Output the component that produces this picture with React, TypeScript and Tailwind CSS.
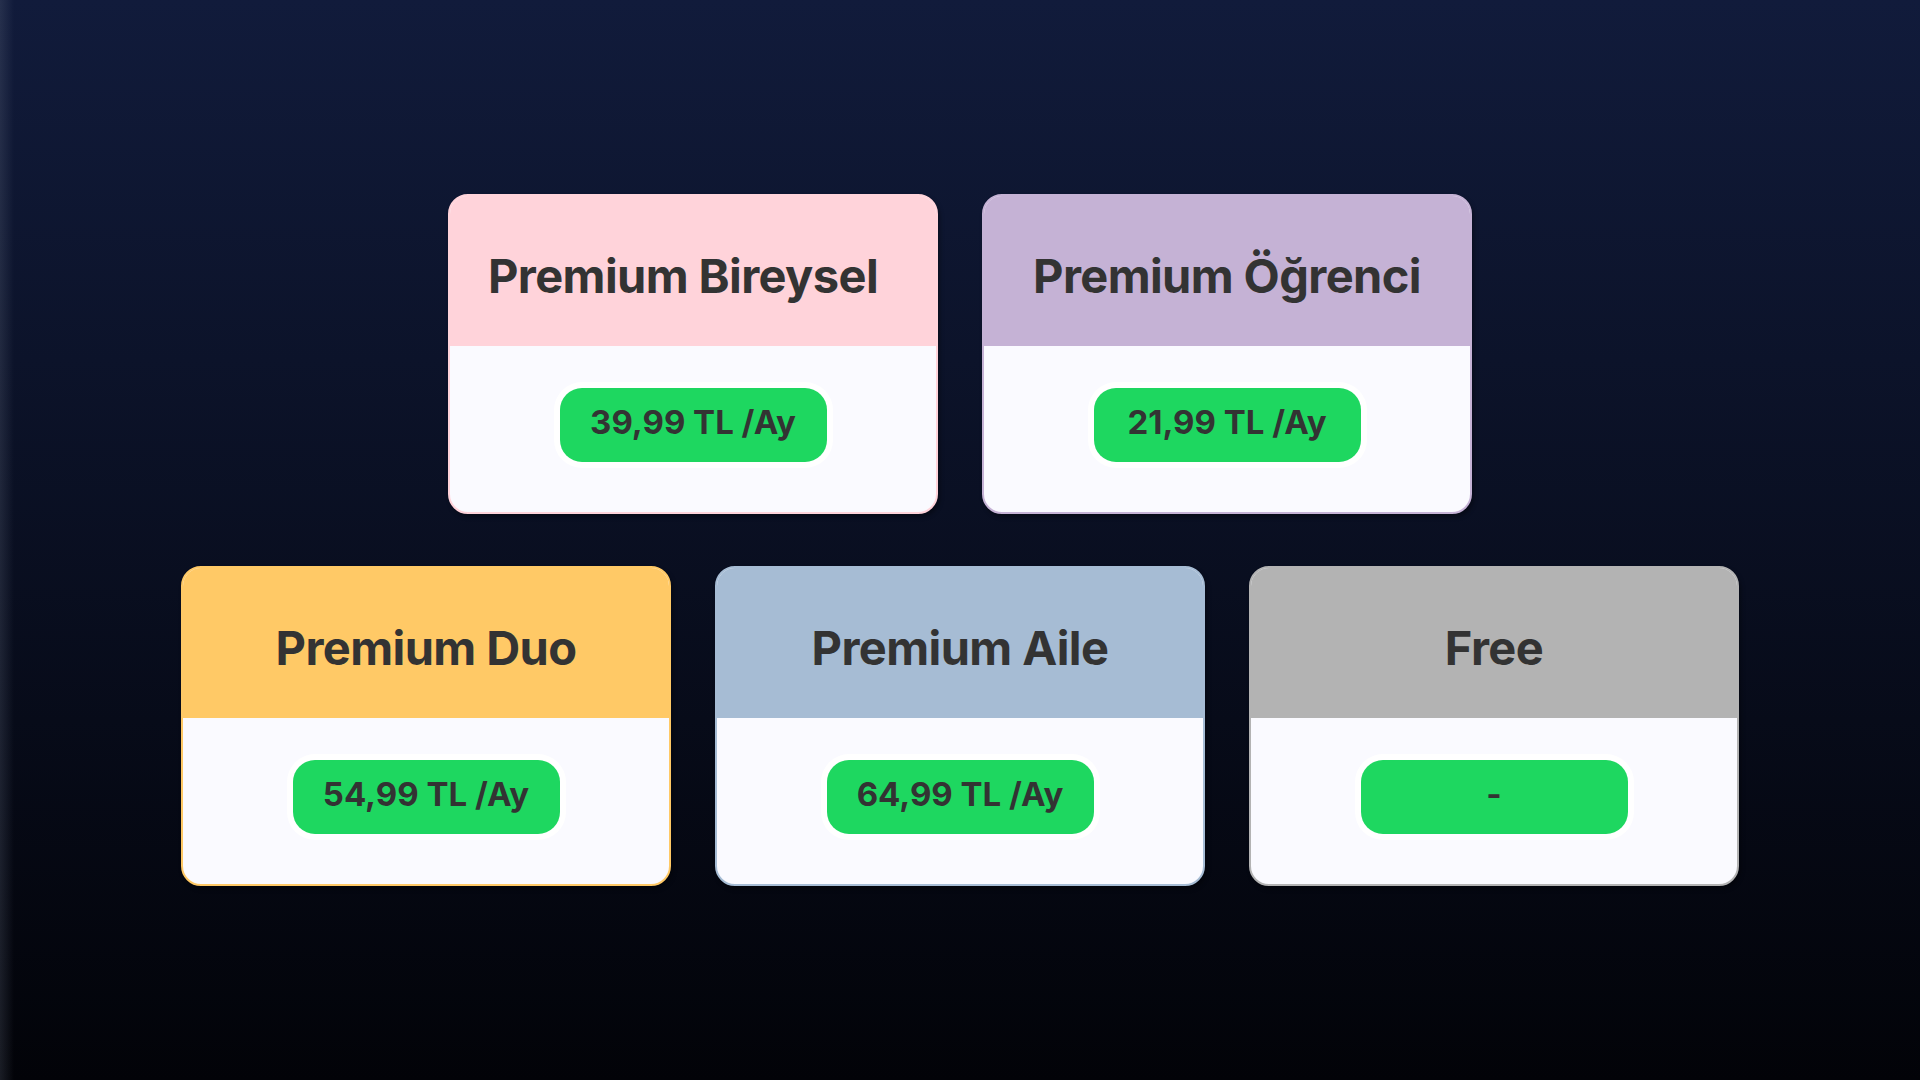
const plans = [
  [
    { name: 'Premium Bireysel', price: '39,99 TL /Ay', header: 'bg-[#ffd3da] pr-5', border: 'border-[#ffd3da]' },
    { name: 'Premium Öğrenci', price: '21,99 TL /Ay', header: 'bg-[#c5b2d5]', border: 'border-[#c5b2d5]' },
  ],
  [
    { name: 'Premium Duo', price: '54,99 TL /Ay', header: 'bg-[#ffc966]', border: 'border-[#ffc966]' },
    { name: 'Premium Aile', price: '64,99 TL /Ay', header: 'bg-[#a6bcd4]', border: 'border-[#a6bcd4]' },
    { name: 'Free', price: '-', header: 'bg-[#b3b3b3]', border: 'border-[#b3b3b3]' },
  ],
]

type Plan = (typeof plans)[number][number]

function PlanCard({ plan }: { plan: Plan }) {
  return (
    <div className={`w-[490px] h-[320px] rounded-[20px] overflow-hidden border-2 ${plan.border} bg-[#fafaff] flex flex-col shadow-[2px_3px_4px_rgba(0,0,0,0.35)]`}>
      <div className={`h-[150px] ${plan.header} flex items-center justify-center pt-[11px]`}>
        <h2 className="text-[47px] font-bold text-[#333333] tracking-[-0.6px]">{plan.name}</h2>
      </div>
      <div className="flex-1 flex items-center justify-center pb-[8px]">
        <div className="w-[279px] h-[86px] rounded-[28px] bg-white p-[6px]">
          <div className="w-full h-full rounded-[22px] bg-[#1ed760] flex items-center justify-center pb-[4px] text-[33px] font-bold text-[#333333]">
            {plan.price}
          </div>
        </div>
      </div>
    </div>
  )
}

export default function App() {
  return (
    <div
      className="min-h-screen w-full flex flex-col items-center justify-center gap-[52px] bg-[linear-gradient(to_right,rgba(110,120,140,0.22),transparent_14px),linear-gradient(to_bottom,#111b3b,#020308)]"
      style={{ fontFamily: 'Inter, "Noto Sans", sans-serif' }}
    >
      {plans.map((row, i) => (
        <div key={i} className="flex gap-[44px]">
          {row.map(plan => (
            <PlanCard key={plan.name} plan={plan} />
          ))}
        </div>
      ))}
    </div>
  )
}
